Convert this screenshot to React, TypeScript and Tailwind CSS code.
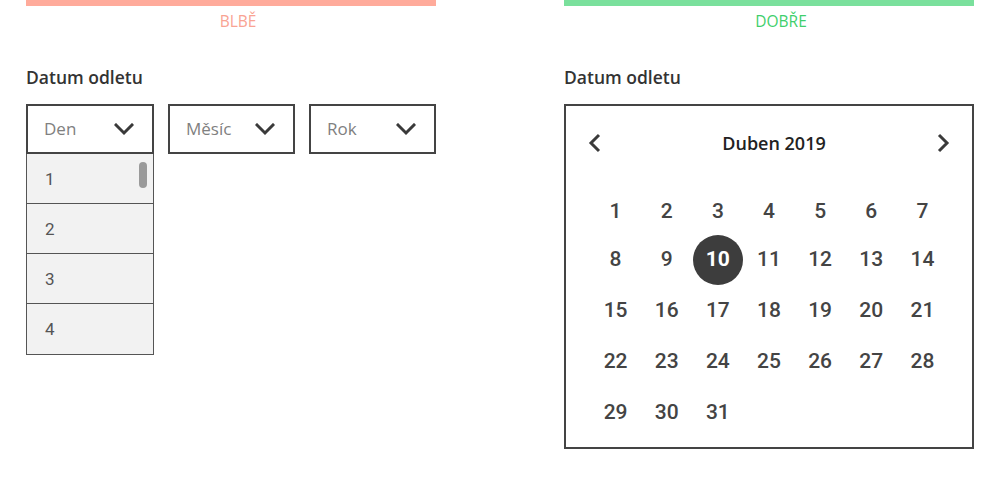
import React from "react";

const ChevronDown = () => (
  <svg width="20" height="13" viewBox="0 0 20 13" className="shrink-0">
    <polyline points="2,2 10,10 18,2" fill="none" stroke="#3a3a3a" strokeWidth="3" strokeLinecap="square" />
  </svg>
);

const ChevronSide = ({ dir }: { dir: "l" | "r" }) => (
  <svg width="14" height="20" viewBox="0 0 14 20">
    {dir === "l" ? (
      <polyline points="11,2 3,10 11,18" fill="none" stroke="#3a3a3a" strokeWidth="3" />
    ) : (
      <polyline points="3,2 11,10 3,18" fill="none" stroke="#3a3a3a" strokeWidth="3" />
    )}
  </svg>
);

const Select = ({ label }: { label: string }) => (
  <div className="w-[128px] h-[50px] border-2 border-[#444] flex items-center justify-between pl-[16px] pr-[18px] bg-white">
    <span className="text-[17px] text-[#808080] font-['Open_Sans',sans-serif] font-normal">{label}</span>
    <ChevronDown />
  </div>
);

export default function App() {
  const days = Array.from({ length: 31 }, (_, i) => i + 1);
  return (
    <div className="w-[1000px] h-[479px] bg-white flex gap-[128px] px-[26px] font-['Open_Sans',sans-serif]">
      {/* Left column */}
      <div className="w-[410px] flex flex-col">
        <div className="h-[6px] bg-[#ffab9b]" />
        <div className="mt-[4px] h-[22px] leading-[22px] text-center pl-[14px] text-[15.5px] text-[#f9a393]">BLBĚ</div>
        <div className="mt-[34px] h-[22px] leading-[22px] text-[17.5px] font-semibold text-[#333]">Datum odletu</div>
        <div className="mt-[16px] flex gap-[14px]">
          <div className="flex flex-col">
            <Select label="Den" />
            <div className="relative w-[128px] border-x border-b border-[#555] bg-[#f2f2f2]">
              {[1, 2, 3, 4].map((n, i) => (
                <div
                  key={n}
                  className={`h-[50px] flex items-center pl-[18px] pt-[2px] text-[17px] text-[#555] font-['Roboto',sans-serif] ${i < 3 ? "border-b border-[#555]" : ""}`}
                >
                  {n}
                </div>
              ))}
              <div className="absolute right-[6px] top-[8px] w-[8px] h-[26px] rounded-full bg-[#9a9a9a]" />
            </div>
          </div>
          <Select label="Měsíc" />
          <Select label="Rok" />
        </div>
      </div>

      {/* Right column */}
      <div className="w-[410px] flex flex-col">
        <div className="h-[6px] bg-[#7ae09c]" />
        <div className="mt-[4px] h-[22px] leading-[22px] text-center pl-[24px] text-[15.5px] text-[#3fcf6c]">DOBŘE</div>
        <div className="mt-[34px] h-[22px] leading-[22px] text-[17.5px] font-semibold text-[#333]">Datum odletu</div>
        <div className="mt-[16px] w-[410px] h-[345px] border-2 border-[#444] flex flex-col">
          <div className="h-[74px] flex items-center justify-between pl-[22px] pr-[22px]">
            <ChevronSide dir="l" />
            <span className="ml-[10px] text-[18px] font-semibold text-[#222]">Duben 2019</span>
            <ChevronSide dir="r" />
          </div>
          <div className="mt-[3px] px-[24px] grid grid-cols-7 auto-rows-[51px] font-['Roboto',sans-serif]">
            {days.map((d) => (
              <div key={d} className={`flex items-center justify-center ${d <= 7 ? "pt-[6px]" : ""}`}>
                {d === 10 ? (
                  <span className="w-[50px] h-[50px] rounded-full bg-[#3d3d3d] text-white font-bold text-[21px] flex items-center justify-center">
                    10
                  </span>
                ) : (
                  <span className="text-[21px] font-medium text-[#444]">{d}</span>
                )}
              </div>
            ))}
          </div>
        </div>
      </div>
    </div>
  );
}
